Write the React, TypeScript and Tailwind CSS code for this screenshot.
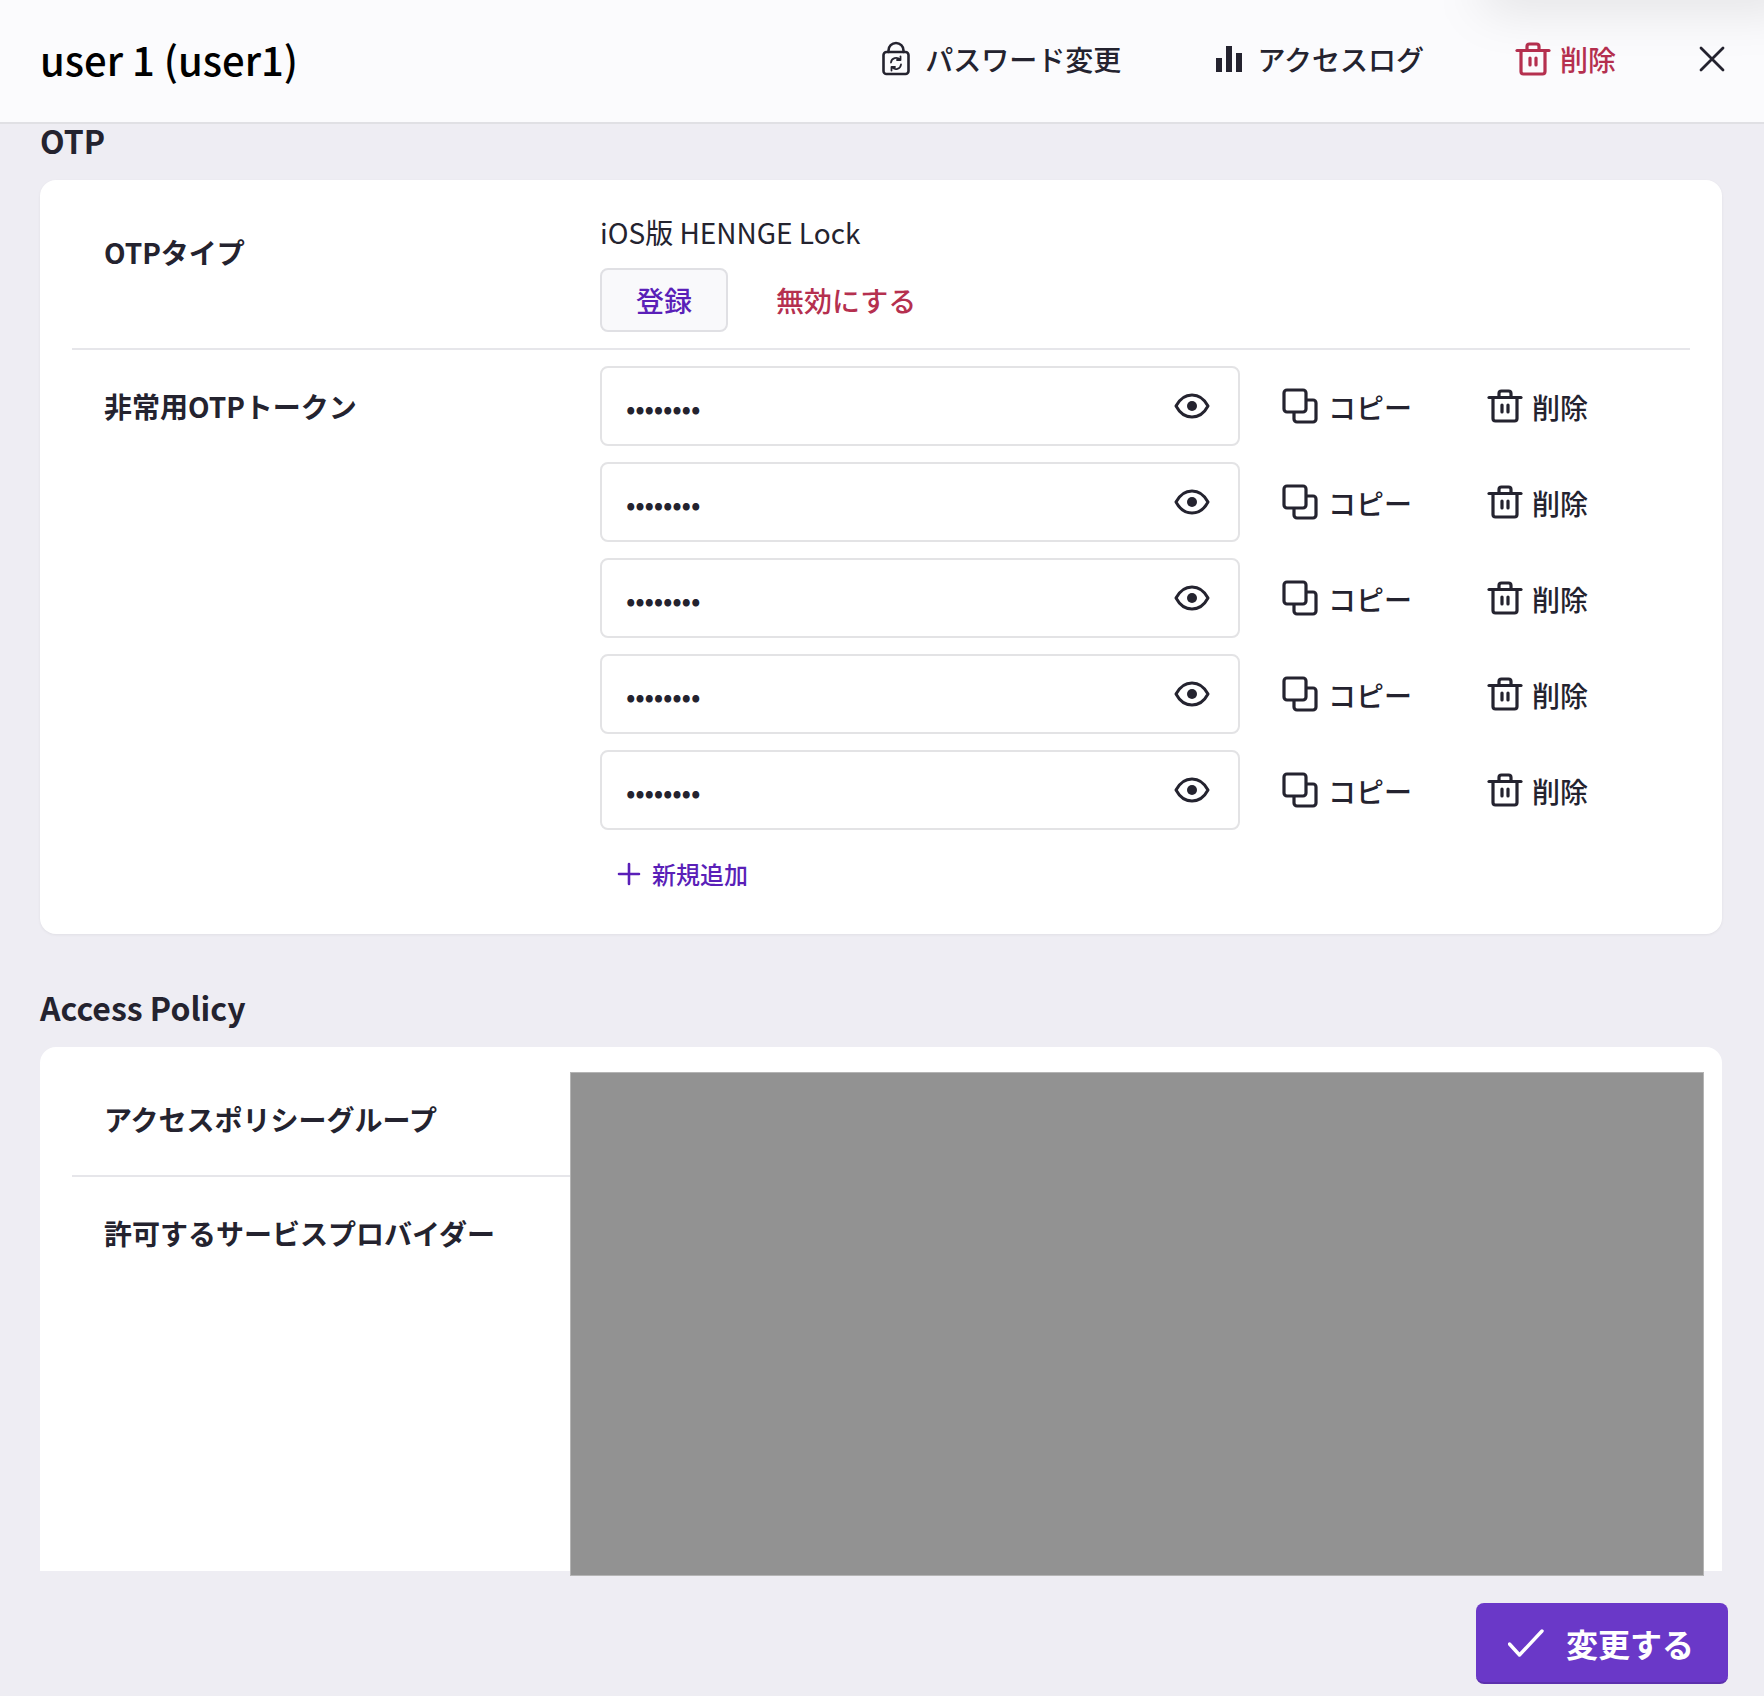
const font = "font-['Noto_Sans_CJK_JP','Noto_Sans',sans-serif]"

const TrashIcon = ({ className }: { className: string }) => (
    <svg viewBox="0 0 36 36" fill="none" stroke="currentColor" strokeWidth="3.2" strokeLinecap="round" strokeLinejoin="round" className={className}>
        <path d="M2 9.500h32" />
        <path d="M12 9.500V5.500a2.500 2.500 0 0 1 2.500-2.500h7a2.500 2.500 0 0 1 2.500 2.500v4" />
        <path d="M6 9.500v21a2.500 2.500 0 0 0 2.500 2.500h19a2.500 2.500 0 0 0 2.500-2.500v-21" />
        <path d="M15 17v7M21 17v7" />
    </svg>
)

const CopyIcon = () => (
    <svg viewBox="0 0 36 36" fill="none" stroke="currentColor" strokeWidth="3.2" strokeLinejoin="round" className="w-9 h-9">
        <rect x="2" y="2" width="22" height="22" rx="3" />
        <path d="M24 12h7a3 3 0 0 1 3 3v16a3 3 0 0 1-3 3H15a3 3 0 0 1-3-3v-7" />
    </svg>
)

const EyeIcon = () => (
    <svg viewBox="0 0 36 36" className="w-9 h-9 text-[#24232f]" fill="none" stroke="currentColor" strokeWidth="3">
        <path d="M2 18C6 10.500 11.500 7 18 7s12 3.500 16 11c-4 7.500-9.500 11-16 11S6 25.500 2 18Z" strokeLinejoin="round" />
        <circle cx="18" cy="18" r="5" fill="currentColor" stroke="none" />
    </svg>
)

const TokenRow = () => (
    <div className="flex items-center">
        <div className="w-[640px] h-20 border-2 border-[#e3e3e5] rounded-lg bg-white flex items-center justify-between pl-[24px] pr-[28px]">
            <span className="text-[28px] leading-none tracking-[-0.25px] text-[#24232f] translate-y-[1px]">••••••••</span>
            <EyeIcon />
        </div>
        <button className="flex items-center ml-[42px] w-[205px] text-[#24232f]">
            <CopyIcon />
            <span className="ml-[10px] text-[28px] font-medium leading-none translate-y-[1px]">コピー</span>
        </button>
        <button className="flex items-center text-[#24232f]">
            <TrashIcon className="w-9 h-9" />
            <span className="ml-[9px] text-[28px] font-medium leading-none translate-y-[1px]">削除</span>
        </button>
    </div>
)

const App = () => {
    return (
        <div className={`relative h-[1696px] overflow-hidden flex flex-col bg-[#eeedf3] text-[#24232f] ${font}`}>
            <header className="h-[124px] shrink-0 flex items-center bg-[#fbfbfd] border-b-2 border-[#e0e0e4] pl-10 pr-[39px] pb-[4px]">
                <h1 className="text-[40px] font-medium text-black leading-none">user 1 (user1)</h1>
                <div className="ml-auto flex items-center text-[28px] font-medium">
                    <button className="flex items-center">
                        <svg viewBox="0 0 28 36" fill="none" stroke="currentColor" strokeWidth="2.6" strokeLinecap="round" strokeLinejoin="round" className="w-[28px] h-9">
                            <rect x="1.500" y="11" width="25" height="22" rx="3" />
                            <path d="M6.500 11V9.500a7.500 7.500 0 0 1 15 0V11" />
                            <path d="M9 21.500a5 5 0 0 1 9-2.500M19 23.500a5 5 0 0 1-9 2.500M18.500 15.500V19h-3.500M9.500 29.500V26H13" strokeWidth="1.800" />
                        </svg>
                        <span className="ml-[15px]">パスワード変更</span>
                    </button>
                    <button className="flex items-center ml-[95px]">
                        <svg viewBox="0 0 26 26" fill="currentColor" className="w-[26px] h-[26px]">
                            <rect x="0" y="12" width="6" height="14" />
                            <rect x="10" y="0" width="6" height="26" />
                            <rect x="20" y="7" width="6" height="19" />
                        </svg>
                        <span className="ml-[15px]">アクセスログ</span>
                    </button>
                    <button className="flex items-center ml-[91px] text-[#b5304f]">
                        <TrashIcon className="w-9 h-9" />
                        <span className="ml-[9px]">削除</span>
                    </button>
                    <button className="ml-[83px]">
                        <svg viewBox="0 0 26 26" fill="none" stroke="currentColor" strokeWidth="2.8" strokeLinecap="round" className="w-[26px] h-[26px]">
                            <path d="M2 2l22 22M24 2L2 24" />
                        </svg>
                    </button>
                </div>
            </header>

            {/* faint shadow bleeding in from the top right corner */}
            <div className="absolute -top-[34px] left-[1480px] w-[320px] h-[44px] rounded-full bg-black/10 blur-xl" />

            <main className="h-[1447px] shrink-0 px-10">
                <h2 className="h-8 flex items-center text-[32px] font-semibold leading-none mb-6">OTP</h2>
                <section className="w-[1682px] h-[754px] bg-white rounded-2xl px-8 shadow-[0_1px_3px_rgba(0,0,0,0.06)]">
                    <div className="flex h-[170px] border-b-2 border-[#e6e6ea]">
                        <div className="w-[528px] pl-8 pt-[52px] text-[28px] font-semibold leading-10">OTPタイプ</div>
                        <div className="pt-[32px]">
                            <p className="text-[28px] leading-10">iOS版 HENNGE Lock</p>
                            <div className="flex items-center mt-[16px]">
                                <button className="w-[128px] h-16 border-2 border-[#e0e0e4] rounded-lg bg-[#f9f9fb] text-[28px] font-medium text-[#5a1fb8]">登録</button>
                                <button className="ml-[48px] text-[28px] font-medium text-[#b5304f]">無効にする</button>
                            </div>
                        </div>
                    </div>
                    <div className="flex pt-4">
                        <div className="w-[528px] pl-8 h-20 flex items-center text-[28px] font-semibold">非常用OTPトークン</div>
                        <div className="flex flex-col gap-4">
                            <TokenRow />
                            <TokenRow />
                            <TokenRow />
                            <TokenRow />
                            <TokenRow />
                            <button className="flex items-center h-10 mt-[8px] ml-[17px] text-[24px] font-medium text-[#5a1fb8]">
                                <svg viewBox="0 0 24 24" fill="none" stroke="currentColor" strokeWidth="2.6" strokeLinecap="round" className="w-6 h-6">
                                    <path d="M12 2v20M2 12h20" />
                                </svg>
                                <span className="ml-[11px]">新規追加</span>
                            </button>
                        </div>
                    </div>
                </section>

                <h2 className="text-[32px] font-semibold leading-10 mt-[53px] mb-[20px]">Access Policy</h2>
                <section className="w-[1682px] h-[524px] bg-white rounded-t-2xl px-8">
                    <div className="flex items-center h-[130px] w-[498px] border-b-2 border-[#e6e6ea] pl-8 pt-[16px] text-[28px] font-semibold">アクセスポリシーグループ</div>
                    <div className="pl-8 pt-[36px] text-[28px] font-semibold leading-10">許可するサービスプロバイダー</div>
                </section>
            </main>

            {/* redacted area sits over the access policy card */}
            <div className="absolute left-[570px] top-[1072px] w-[1134px] h-[504px] bg-[#929292] border border-[#b4b4b4]" />

            <footer className="flex-1 flex justify-end items-start pt-[32px] pr-9">
                <button className="flex items-center w-[252px] h-[81px] pl-[32px] rounded-lg bg-[#6a38c8] border-b-2 border-[#5c30ad] text-white text-[32px] font-semibold">
                    <svg viewBox="0 0 36 28" fill="none" stroke="currentColor" strokeWidth="3.4" strokeLinecap="round" strokeLinejoin="round" className="w-9 h-7">
                        <path d="M1.500 15l10 11L34 2" />
                    </svg>
                    <span className="ml-[22px]">変更する</span>
                </button>
            </footer>
        </div>
    )
}

export default App
